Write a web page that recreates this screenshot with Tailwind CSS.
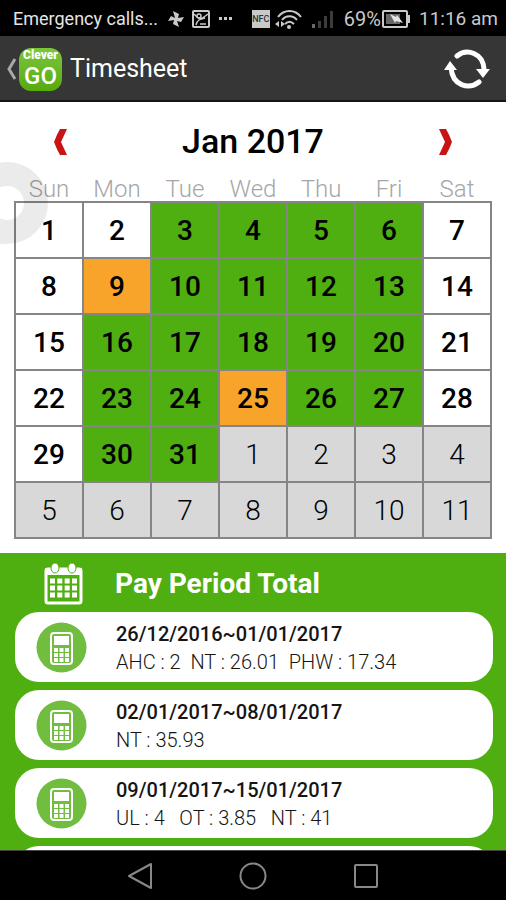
<!DOCTYPE html>
<html lang="en">
  <head>
    <meta charset="UTF-8" />
    <meta name="viewport" content="width=device-width, initial-scale=1.0" />
    <title>Timesheet - Clever GO</title>
    <!-- Tailwind CSS -->
    <script src="https://cdn.jsdelivr.net/npm/@tailwindcss/browser@4"></script>
  </head>
  <body class="bg-black font-[Roboto,sans-serif]">
    <div class="h-screen flex flex-col overflow-hidden">
      <!-- Status Bar -->
      <div class="h-9 pt-[2px] shrink-0 flex items-center justify-between pl-[13px] pr-2 text-lg text-[#c9c9c9]">
        <div class="flex items-center gap-2">
          <span class="mr-[2px] text-[#e4e4e4]">Emergency calls...</span>
          <svg class="w-4 h-4" viewBox="0 0 16 16" fill="currentColor">
            <path d="M7 7L5 0l6 3-1 4 6-1-3 5-4-1 2 6-6-3 1-4-6 1 3-5z" />
          </svg>
          <svg class="w-[18px] h-[18px]" viewBox="0 0 18 18" fill="none" stroke="currentColor" stroke-width="2">
            <rect x="1" y="1" width="16" height="16" rx="1" />
            <circle cx="7" cy="6" r="2" stroke-width="1.5" />
            <path d="M2 4l3 3c3 3 6 1 11-3M4 15c1-5 4-6 9-7M8 14h6" stroke-width="1.5" />
          </svg>
          <svg class="w-4 h-4" viewBox="0 0 16 16" fill="currentColor">
            <rect x="1" y="6" width="3" height="3" />
            <rect x="6" y="6" width="3" height="3" />
            <rect x="11" y="6" width="3" height="3" />
          </svg>
        </div>
        <div class="flex items-center">
          <span class="w-[18px] h-[18px] mr-1 bg-[#c9c9c9] text-[#333] text-[9px] leading-[18px] text-center font-medium">NFC</span>
          <svg class="w-7 h-5 mr-[10px]" viewBox="0 0 28 20" fill="none" stroke="currentColor" stroke-width="2">
            <path d="M4 8c6-8 17-8 23 0M8 11c4-5 11-5 15 0M11 15c3-3 6-3 9 0" />
            <circle cx="15" cy="18" r="2" fill="currentColor" stroke="none" />
            <path d="M5 12v6l-4-3zM7 12v6l4-3z" fill="currentColor" stroke="none" />
          </svg>
          <svg class="w-[22px] h-[18px] mr-[10px]" viewBox="0 0 22 18" fill="#3c3c3c">
            <rect x="0" y="14" width="3" height="4" fill="#6a6a6a" />
            <rect x="6" y="11" width="3" height="7" />
            <rect x="12" y="6" width="3" height="12" />
            <rect x="18" y="1" width="3" height="17" />
          </svg>
          <span class="text-xl">69%</span>
          <svg class="w-[30px] h-[18px] mr-2" viewBox="0 0 30 18">
            <rect x="2" y="1" width="24" height="16" rx="1" fill="none" stroke="currentColor" stroke-width="2" />
            <rect x="5" y="4" width="14" height="10" fill="#666" />
            <rect x="27" y="5" width="2" height="8" fill="currentColor" />
            <path d="M9 4l6 3 1-2 6 8-7-2-1 2z" fill="#e4e4e4" />
          </svg>
          <span class="text-[19px]">11:16 am</span>
        </div>
      </div>

      <!-- App Header -->
      <header class="h-[66px] pt-[2px] shrink-0 flex items-center justify-between pl-[6px] pr-4 bg-[#363636] border-b-2 border-[#161616]">
        <div class="flex items-center">
          <button aria-label="Back">
            <svg class="w-[11px] h-[22px]" viewBox="0 0 11 22" fill="none" stroke="#a8a8a8" stroke-width="3">
              <path d="M9 1L3 11l6 10" />
            </svg>
          </button>
          <div class="w-[43px] h-[43px] ml-[2px] flex flex-col items-center rounded-xl bg-linear-to-b from-[#7cc63c] to-[#58aa08] text-white">
            <span class="text-xs leading-[14px] font-black">Clever</span>
            <span class="text-2xl leading-7 font-medium">GO</span>
          </div>
          <h1 class="ml-2 text-[25px] text-white">Timesheet</h1>
        </div>
        <button aria-label="Refresh">
          <svg class="w-[46px] h-10" viewBox="0 0 46 40" fill="none" stroke="#fff" stroke-width="5">
            <path d="M13 7C23-1 39 4 40 20" stroke-linecap="round" />
            <path d="M35 33C25 41 8 37 7 18" stroke-linecap="round" />
            <path d="M32 20h14l-7 9z" fill="#fff" stroke="none" />
            <path d="M0 21h13L6 12z" fill="#fff" stroke="none" />
          </svg>
        </button>
      </header>

      <!-- Calendar -->
      <main class="relative shrink-0 bg-white px-[14px] pb-[14px]">
        <div class="h-[75px] px-[38px] pt-1 flex items-center justify-between">
          <button aria-label="Previous month">
            <svg class="w-4 h-[26px]" viewBox="0 0 16 26" fill="#c81414">
              <path d="M8 0h7L9 13l6 13H8Q5 21 2 13Q5 5 8 0z" />
            </svg>
          </button>
          <h2 class="text-[34px] font-medium text-black">Jan 2017</h2>
          <button aria-label="Next month">
            <svg class="w-4 h-[26px]" viewBox="0 0 16 26" fill="#c81414">
              <path d="M8 0H1l6 13-6 13h7Q11 21 14 13Q11 5 8 0z" />
            </svg>
          </button>
        </div>
        <table class="w-full table-fixed border-collapse text-center text-[28px] text-black">
          <thead>
            <tr class="h-6 text-2xl leading-6 text-[#a6a6a6]">
              <th class="p-0 font-light">Sun</th>
              <th class="p-0 font-light">Mon</th>
              <th class="p-0 font-light">Tue</th>
              <th class="p-0 font-light">Wed</th>
              <th class="p-0 font-light">Thu</th>
              <th class="p-0 font-light">Fri</th>
              <th class="p-0 font-light">Sat</th>
            </tr>
          </thead>
          <tbody class="font-medium border-2 border-[#777] [&_td]:border-2 [&_td]:border-[#858585] [&_td]:p-0 [&_td]:pt-[2px]">
            <tr class="h-14">
              <td>1</td>
              <td>2</td>
              <td class="bg-[#4fae10]">3</td>
              <td class="bg-[#4fae10]">4</td>
              <td class="bg-[#4fae10]">5</td>
              <td class="bg-[#4fae10]">6</td>
              <td>7</td>
            </tr>
            <tr class="h-14">
              <td>8</td>
              <td class="bg-[#f8a42a]">9</td>
              <td class="bg-[#4fae10]">10</td>
              <td class="bg-[#4fae10]">11</td>
              <td class="bg-[#4fae10]">12</td>
              <td class="bg-[#4fae10]">13</td>
              <td>14</td>
            </tr>
            <tr class="h-14">
              <td>15</td>
              <td class="bg-[#4fae10]">16</td>
              <td class="bg-[#4fae10]">17</td>
              <td class="bg-[#4fae10]">18</td>
              <td class="bg-[#4fae10]">19</td>
              <td class="bg-[#4fae10]">20</td>
              <td>21</td>
            </tr>
            <tr class="h-14">
              <td>22</td>
              <td class="bg-[#4fae10]">23</td>
              <td class="bg-[#4fae10]">24</td>
              <td class="bg-[#f8a42a]">25</td>
              <td class="bg-[#4fae10]">26</td>
              <td class="bg-[#4fae10]">27</td>
              <td>28</td>
            </tr>
            <tr class="h-14">
              <td>29</td>
              <td class="bg-[#4fae10]">30</td>
              <td class="bg-[#4fae10]">31</td>
              <td class="bg-[#d8d8d8] font-light">1</td>
              <td class="bg-[#d8d8d8] font-light">2</td>
              <td class="bg-[#d8d8d8] font-light">3</td>
              <td class="bg-[#d8d8d8] font-light">4</td>
            </tr>
            <tr class="h-14 bg-[#d8d8d8] font-light">
              <td>5</td>
              <td>6</td>
              <td>7</td>
              <td>8</td>
              <td>9</td>
              <td>10</td>
              <td>11</td>
            </tr>
          </tbody>
        </table>
        <!-- Floating touch button, half off the screen edge -->
        <div class="absolute top-[60px] -left-[34px] w-[82px] h-[82px] rounded-full border-[24px] border-black/8"></div>
      </main>

      <!-- Pay Period Total -->
      <section class="flex-1 min-h-0 overflow-hidden bg-[#4fae10] pl-[15px] pr-[13px]">
        <div class="h-[59px] flex items-center pt-[2px] pl-[29px]">
          <svg class="w-[39px] h-[42px]" viewBox="0 0 39 42">
            <rect x="2" y="6" width="35" height="34" rx="2" fill="none" stroke="#fff" stroke-width="3" />
            <path d="M1 5h37v7H1z" fill="#fff" />
            <ellipse cx="11" cy="5" rx="4" ry="5" fill="#fff" stroke="#4fae10" />
            <ellipse cx="28" cy="5" rx="4" ry="5" fill="#fff" stroke="#4fae10" />
            <path d="M6 18h27M6 25h27M6 32h27" stroke="#fff" stroke-width="5" stroke-dasharray="5 2.330" />
          </svg>
          <h2 class="ml-8 text-[28px] font-bold text-white">Pay Period Total</h2>
        </div>
        <ul class="flex flex-col gap-2 text-xl leading-7 text-[#151515]">
          <li class="h-[70px] shrink-0 flex items-center gap-[29px] pl-[21px] bg-white rounded-3xl">
            <svg class="w-[51px] h-[51px]" viewBox="0 0 51 51">
              <circle cx="25.500" cy="25.500" r="25" fill="#70bd40" />
              <rect x="15" y="11" width="21" height="31" rx="3" fill="none" stroke="#fff" stroke-width="2" />
              <rect x="18" y="14" width="15" height="9" fill="#fff" />
              <path d="M18 28h15M18 33h15M18 38h15" stroke="#fff" stroke-width="4" stroke-dasharray="4 1.500" />
            </svg>
            <div class="pt-[2px]">
              <p class="font-medium">26/12/2016~01/01/2017</p>
              <p class="font-light whitespace-pre">AHC : 2  NT : 26.01  PHW : 17.34</p>
            </div>
          </li>
          <li class="h-[70px] shrink-0 flex items-center gap-[29px] pl-[21px] bg-white rounded-3xl">
            <svg class="w-[51px] h-[51px]" viewBox="0 0 51 51">
              <circle cx="25.500" cy="25.500" r="25" fill="#70bd40" />
              <rect x="15" y="11" width="21" height="31" rx="3" fill="none" stroke="#fff" stroke-width="2" />
              <rect x="18" y="14" width="15" height="9" fill="#fff" />
              <path d="M18 28h15M18 33h15M18 38h15" stroke="#fff" stroke-width="4" stroke-dasharray="4 1.500" />
            </svg>
            <div class="pt-[2px]">
              <p class="font-medium">02/01/2017~08/01/2017</p>
              <p class="font-light whitespace-pre">NT : 35.93</p>
            </div>
          </li>
          <li class="h-[70px] shrink-0 flex items-center gap-[29px] pl-[21px] bg-white rounded-3xl">
            <svg class="w-[51px] h-[51px]" viewBox="0 0 51 51">
              <circle cx="25.500" cy="25.500" r="25" fill="#70bd40" />
              <rect x="15" y="11" width="21" height="31" rx="3" fill="none" stroke="#fff" stroke-width="2" />
              <rect x="18" y="14" width="15" height="9" fill="#fff" />
              <path d="M18 28h15M18 33h15M18 38h15" stroke="#fff" stroke-width="4" stroke-dasharray="4 1.500" />
            </svg>
            <div class="pt-[2px]">
              <p class="font-medium">09/01/2017~15/01/2017</p>
              <p class="font-light whitespace-pre">UL : 4   OT : 3.85   NT : 41</p>
            </div>
          </li>
          <li class="h-[70px] shrink-0 bg-white rounded-3xl"></li>
        </ul>
      </section>

      <!-- Navigation Bar -->
      <nav class="h-[50px] shrink-0 flex items-center justify-center gap-[86px] bg-black border-t border-[#444]">
        <button aria-label="Back">
          <svg class="w-[26px] h-7" viewBox="0 0 26 28" fill="none" stroke="#888" stroke-width="2" stroke-linejoin="round">
            <path d="M24 2v24L2 14z" />
          </svg>
        </button>
        <button aria-label="Home">
          <svg class="w-7 h-7" viewBox="0 0 28 28" fill="none" stroke="#888" stroke-width="2">
            <circle cx="14" cy="14" r="12.500" />
          </svg>
        </button>
        <button aria-label="Recent apps">
          <svg class="w-[26px] h-7" viewBox="0 0 26 28" fill="none" stroke="#888" stroke-width="2">
            <rect x="2" y="3" width="22" height="22" rx="1" />
          </svg>
        </button>
      </nav>
    </div>
  </body>
</html>
